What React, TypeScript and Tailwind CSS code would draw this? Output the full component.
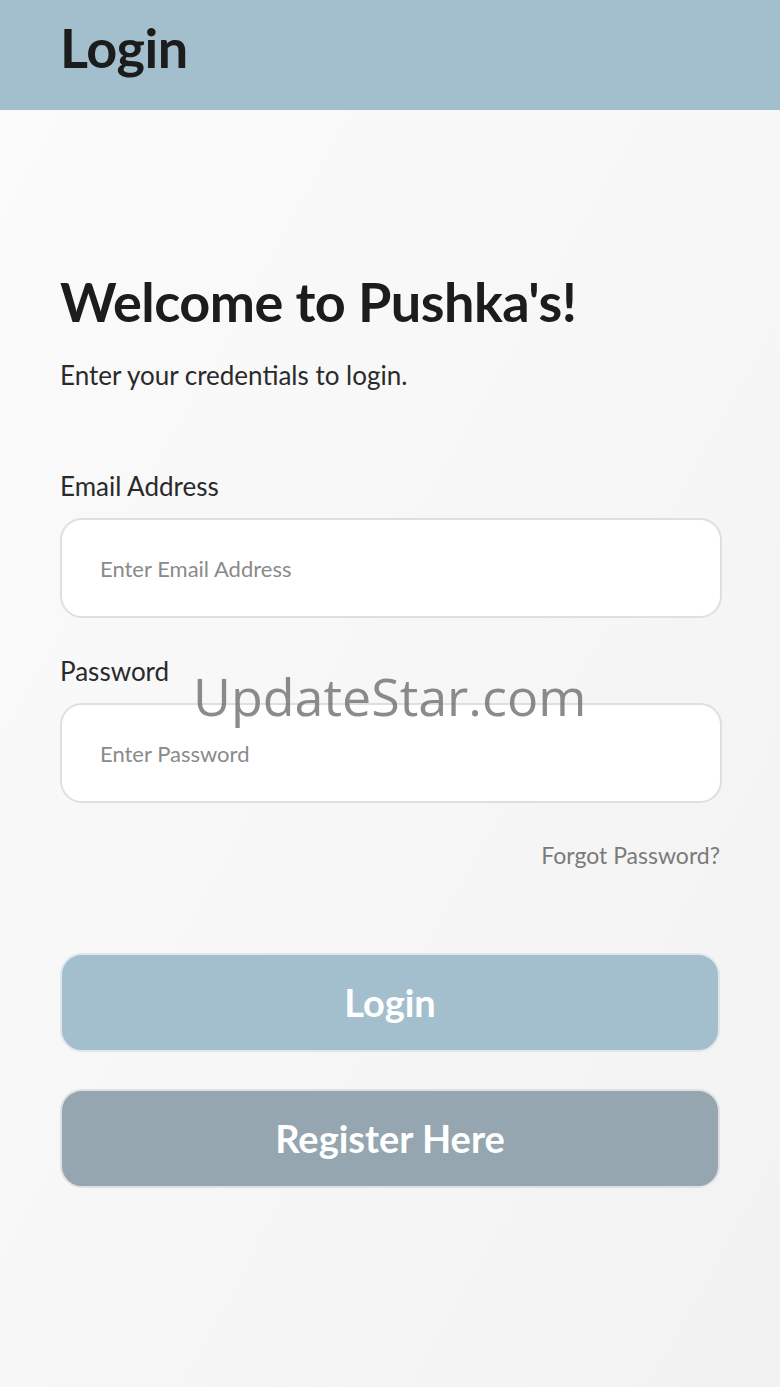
import React from 'react';

export default function App() {
  return (
    <div className="relative min-h-[1387px] w-full bg-gradient-to-br from-[#fbfbfb] via-[#f7f7f7] to-[#f2f2f2] font-['Lato',sans-serif] text-[#1c1c1c]">
      <header className="h-[110px] bg-[#a3bfce] px-[60px] flex items-center pb-[14px]">
        <h1 className="text-[54px] font-bold tracking-[-0.5px] leading-[44px]">Login</h1>
      </header>

      <main className="px-[60px] pt-[167px]">
        <h2 className="text-[54px] font-bold leading-[49px] tracking-[-0.5px]">Welcome to Pushka's!</h2>
        <p className="mt-[37px] text-[26px] leading-[24px] text-[#2a2a2a]">Enter your credentials to login.</p>

        <label className="block mt-[87px] text-[26px] leading-[24px] text-[#2a2a2a]">Email Address</label>
        <div className="mt-[20px] h-[100px] w-[662px] rounded-[22px] border-2 border-[#dfdfdf] bg-white flex items-center px-[38px]">
          <span className="text-[22px] text-[#8a8a8a]">Enter Email Address</span>
        </div>

        <label className="block mt-[41px] text-[26px] leading-[24px] text-[#2a2a2a]">Password</label>
        <div className="mt-[20px] h-[100px] w-[662px] rounded-[22px] border-2 border-[#dfdfdf] bg-white flex items-center px-[38px]">
          <span className="text-[22px] text-[#8a8a8a]">Enter Password</span>
        </div>

        <div className="mt-[42px] w-[660px] flex justify-end">
          <span className="text-[23px] leading-[20px] text-[#7a7a7a]">Forgot Password?</span>
        </div>

        <button className="mt-[88px] h-[99px] w-[660px] rounded-[22px] border-2 border-[#e0e6ea] bg-[#a3bfce] text-white text-[38px] font-bold flex items-center justify-center">
          Login
        </button>
        <button className="mt-[37px] h-[99px] w-[660px] rounded-[22px] border-2 border-[#dde1e4] bg-[#95a6b0] text-white text-[38px] font-bold flex items-center justify-center">
          Register Here
        </button>
      </main>

      <div className="absolute left-[193px] top-[670px] text-[52px] leading-none font-['Open_Sans',sans-serif] text-[#6e6e6e]/80 pointer-events-none">
        UpdateStar.com
      </div>
    </div>
  );
}
